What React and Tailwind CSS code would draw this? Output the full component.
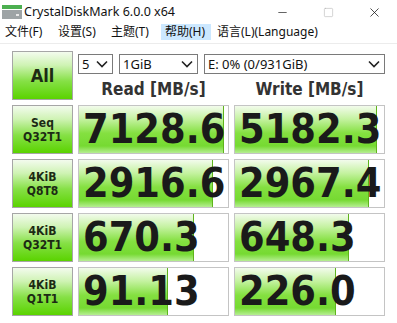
import { Minus, Square, X } from "lucide-react";

const UI_FONT = { fontFamily: '"Noto Sans", "Noto Sans CJK SC", sans-serif' };
const BOLD_FONT = { fontFamily: '"DejaVu Sans Condensed", "DejaVu Sans", sans-serif', fontStretch: "condensed" };

const MENU = ["文件(F)", "设置(S)", "主题(T)", "帮助(H)", "语言(L)(Language)"];

const ROWS = [
    { top: "Seq", bottom: "Q32T1", read: "7128.6", readFill: 145, write: "5182.3", writeFill: 142 },
    { top: "4KiB", bottom: "Q8T8", read: "2916.6", readFill: 134, write: "2967.4", writeFill: 134 },
    { top: "4KiB", bottom: "Q32T1", read: "670.3", readFill: 115, write: "648.3", writeFill: 114 },
    { top: "4KiB", bottom: "Q1T1", read: "91.13", readFill: 89, write: "226.0", writeFill: 101 },
];

const Chevron = () => (
    <svg width="12" height="8" viewBox="0 0 12 8" className="shrink-0">
        <polyline points="1,1.5 6,6.5 11,1.5" fill="none" stroke="#222" strokeWidth="1.6" />
    </svg>
);

const Select = ({ value, className }) => (
    <div className={`h-[20px] flex items-center justify-between border border-[#7a7a7a] bg-white pl-[3px] pr-[4px] text-[13px] text-[#111] ${className}`} style={UI_FONT}>
        <span className="leading-none">{value}</span>
        <Chevron />
    </div>
);

const LabelButton = ({ children, className = "" }) => (
    <div
        className={`w-[61px] flex flex-col items-center justify-center border border-[#a6a6a6] bg-[linear-gradient(to_bottom,#f3fbee_0%,#cff3b4_28%,#86e046_62%,#5ad300_100%)] text-[#1c2a14] font-bold ${className}`}
        style={BOLD_FONT}
    >
        {children}
    </div>
);

const ValueCell = ({ value, fill }) => (
    <div className="relative w-[151px] h-[49px] border border-[#c4c4c4] bg-white overflow-hidden">
        <div
            className="absolute left-0 top-0 bottom-0 border-r border-[#5fb41c] bg-[linear-gradient(to_bottom,#f2fbec_0%,#c4f2a0_28%,#84e040_58%,#76da32_85%,#b6ee92_100%)]"
            style={{ width: fill }}
        />
        <div className="relative h-full flex items-center pl-[4px] text-[41px] font-bold text-[#1a1a1a] leading-none" style={BOLD_FONT}>
            {value}
        </div>
    </div>
);

export default function App() {
    return (
        <div className="w-[397px] h-[323px] bg-white overflow-hidden">
            {/* title bar */}
            <div className="h-[24px] flex items-center">
                <svg width="20" height="16" viewBox="0 0 20 16" className="ml-[2px]">
                    <rect x="0" y="1" width="20" height="4" fill="#4caf50" />
                    <rect x="0" y="6" width="20" height="9" fill="#9ea4a6" />
                    <rect x="14" y="10" width="3" height="2" fill="#e8e8e8" />
                </svg>
                <span className="ml-[2px] text-[12.5px] text-[#111]" style={UI_FONT}>CrystalDiskMark 6.0.0 x64</span>
                <div className="ml-auto flex items-center">
                    <div className="w-[46px] flex justify-center"><Minus size={13} strokeWidth={1.2} color="#111" /></div>
                    <div className="w-[46px] flex justify-center"><Square size={11} strokeWidth={1.2} color="#b0b0b0" /></div>
                    <div className="w-[46px] flex justify-center"><X size={15} strokeWidth={1.2} color="#111" /></div>
                </div>
            </div>

            {/* menu */}
            <div className="h-[20px] flex items-start gap-[3px] pl-[2px] border-b border-[#ececec]" style={UI_FONT}>
                {MENU.map((m, i) => (
                    <div
                        key={m}
                        className={`h-[16px] flex items-center px-[3px] text-[12px] text-[#111] whitespace-nowrap ${i < 4 ? "w-[50px]" : ""} ${i === 3 ? "bg-[#cce8ff] border border-[#cce8ff]" : ""}`}
                    >
                        {m}
                    </div>
                ))}
            </div>

            {/* main */}
            <div className="pl-[12px] pt-[7px] flex flex-col gap-[5px]">
                <div className="flex gap-[5px]">
                    <LabelButton className="h-[49px] text-[18px]">All</LabelButton>
                    <div className="flex flex-col pt-[3px]">
                        <div className="flex gap-[6px]">
                            <Select value="5" className="w-[35px]" />
                            <Select value="1GiB" className="w-[79px]" />
                            <Select value="E: 0% (0/931GiB)" className="w-[181px]" />
                        </div>
                        <div className="flex gap-[5px] mt-[5px] h-[21px] items-center text-[17px] font-bold text-[#333]" style={BOLD_FONT}>
                            <div className="w-[151px] text-center">Read [MB/s]</div>
                            <div className="w-[151px] text-center">Write [MB/s]</div>
                        </div>
                    </div>
                </div>

                {ROWS.map((r) => (
                    <div key={r.top + r.bottom} className="flex gap-[5px]">
                        <LabelButton className="h-[49px] text-[12px] leading-[14px]">
                            <span>{r.top}</span>
                            <span>{r.bottom}</span>
                        </LabelButton>
                        <ValueCell value={r.read} fill={r.readFill} />
                        <ValueCell value={r.write} fill={r.writeFill} />
                    </div>
                ))}
            </div>
        </div>
    );
}
